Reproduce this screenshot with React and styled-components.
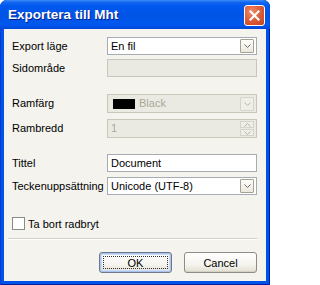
import styled, { createGlobalStyle } from 'styled-components';

const GlobalStyle = createGlobalStyle`
  html, body {
    margin: 0;
    padding: 0;
    background: #ffffff;
  }
  * {
    box-sizing: border-box;
  }
`;

const Window = styled.div`
  width: 270px;
  height: 285px;
  display: flex;
  flex-direction: column;
  background: #0053e8;
  border-radius: 7px 7px 0 0;
  box-shadow: inset 1px 0 0 #0a3bd0, inset -1px 0 0 #001ea0, inset 0 -1px 0 #001ea0;
  font-family: 'Liberation Sans', Arial, sans-serif;
  font-size: 11px;
  color: #000;
  overflow: hidden;
`;

const TitleBar = styled.div`
  height: 29px;
  flex: none;
  display: flex;
  align-items: center;
  justify-content: space-between;
  padding: 0 5px 0 8px;
  border-radius: 7px 7px 0 0;
  background: linear-gradient(
    180deg,
    #3d8ef8 0%,
    #1267f0 8%,
    #0058ee 20%,
    #0054e6 55%,
    #0058ee 85%,
    #0046d8 100%
  );
`;

const Title = styled.span`
  font-family: 'Liberation Sans', Arial, sans-serif;
  font-weight: bold;
  font-size: 13.5px;
  color: #fff;
  text-shadow: 1px 1px 0 #0a1e8a;
`;

const CloseButton = styled.div`
  width: 21px;
  height: 21px;
  margin-top: 1px;
  display: flex;
  align-items: center;
  justify-content: center;
  border: 1px solid #fff;
  border-radius: 3px;
  background: radial-gradient(circle at 35% 30%, #f08a6a 0%, #e0603c 45%, #c4401c 100%);
`;

const Body = styled.div`
  flex: 1;
  margin: 0 4px 4px;
  padding: 8px 9px 8px 8px;
  background: #f4f3ee;
  display: flex;
  flex-direction: column;
`;

const Section = styled.div`
  display: grid;
  grid-template-columns: 95px 150px;
  grid-auto-rows: ${({ $h }) => $h}px;
  row-gap: ${({ $gap }) => $gap}px;
  margin-top: ${({ $mt }) => $mt || 0}px;
  align-items: center;
`;

const Label = styled.span`
  white-space: nowrap;
  line-height: 13px;
`;

const Field = styled.div`
  height: 100%;
  display: flex;
  align-items: center;
  padding: 0 2px 0 3px;
  border: 1px solid ${({ $disabled }) => ($disabled ? '#c9c7ba' : '#a5acb2')};
  background: ${({ $disabled }) => ($disabled ? '#ebeae2' : '#fff')};
  color: ${({ $disabled }) => ($disabled ? '#aca899' : '#000')};
`;

const FieldText = styled.span`
  flex: 1;
  white-space: nowrap;
  line-height: 13px;
`;

const Swatch = styled.span`
  width: 22px;
  height: 10px;
  margin: 0 4px 0 2px;
  background: #000;
  flex: none;
`;

const DropButton = styled.div`
  width: 14px;
  height: 14px;
  flex: none;
  display: flex;
  align-items: center;
  justify-content: center;
  border: 1px solid ${({ $disabled }) => ($disabled ? '#d6d3c8' : '#a5a293')};
  border-radius: 1px;
  background: ${({ $disabled }) =>
    $disabled ? '#efeee8' : 'linear-gradient(180deg, #fdfdfb 0%, #ebe8de 100%)'};
`;

const Spinner = styled.div`
  width: 14px;
  height: 15px;
  flex: none;
  display: flex;
  flex-direction: column;
  gap: 1px;
`;

const SpinPart = styled.div`
  flex: 1;
  display: flex;
  align-items: center;
  justify-content: center;
  border: 1px solid #d6d3c8;
  background: #efeee8;
`;

const CheckRow = styled.label`
  display: flex;
  align-items: center;
  gap: 3px;
  margin-top: 22px;
  height: 13px;
`;

const CheckBox = styled.span`
  width: 13px;
  height: 13px;
  border: 1px solid #8a8a86;
  background: #fff;
  flex: none;
`;

const Separator = styled.div`
  margin: 8px 0 0 -4px;
  height: 2px;
  border-top: 1px solid #d0cfc8;
  border-bottom: 1px solid #fff;
`;

const ButtonRow = styled.div`
  display: flex;
  justify-content: flex-end;
  gap: 12px;
  margin-top: 12px;
`;

const Button = styled.div`
  width: 73px;
  height: 21px;
  display: flex;
  align-items: center;
  justify-content: center;
  border: 1px solid ${({ $default }) => ($default ? '#6e7a8a' : '#8e8c84')};
  border-radius: 3px;
  background: linear-gradient(180deg, #ffffff 0%, #f5f4ef 60%, #e2dfd4 100%);
  box-shadow: ${({ $default }) =>
    $default ? 'inset 0 0 0 1px #a9c3ee, inset 0 0 0 2px #cddcf5' : 'inset 0 -1px 0 #d6d2c2'};
  position: relative;
`;

const FocusRing = styled.span`
  position: absolute;
  inset: 3px;
  border: 1px dotted #333;
`;

const Chevron = ({ up, color = '#6d6c66' }) => (
  <svg width="7" height="4" viewBox="0 0 7 4">
    <path
      d={up ? 'M0.5 3.5 L3.5 0.5 L6.5 3.5' : 'M0.5 0.5 L3.5 3.5 L6.5 0.5'}
      fill="none"
      stroke={color}
      strokeWidth="1"
    />
  </svg>
);

export default function App() {
  return (
    <>
      <GlobalStyle />
      <Window>
        <TitleBar>
          <Title>Exportera till Mht</Title>
          <CloseButton>
            <svg width="11" height="11" viewBox="0 0 11 11">
              <path d="M1.5 1.5 L9.5 9.5 M9.5 1.5 L1.5 9.5" stroke="#fff" strokeWidth="2.2" strokeLinecap="square" />
            </svg>
          </CloseButton>
        </TitleBar>
        <Body>
          <Section $h={18} $gap={4}>
            <Label>Export läge</Label>
            <Field>
              <FieldText>En fil</FieldText>
              <DropButton>
                <Chevron />
              </DropButton>
            </Field>
            <Label>Sidområde</Label>
            <Field $disabled />
          </Section>

          <Section $h={19} $gap={6} $mt={17}>
            <Label>Ramfärg</Label>
            <Field $disabled>
              <Swatch />
              <FieldText>Black</FieldText>
              <DropButton $disabled>
                <Chevron color="#b5b3aa" />
              </DropButton>
            </Field>
            <Label>Rambredd</Label>
            <Field $disabled>
              <FieldText>1</FieldText>
              <Spinner>
                <SpinPart>
                  <Chevron up color="#b5b3aa" />
                </SpinPart>
                <SpinPart>
                  <Chevron color="#b5b3aa" />
                </SpinPart>
              </Spinner>
            </Field>
          </Section>

          <Section $h={18} $gap={5} $mt={16}>
            <Label>Tittel</Label>
            <Field>
              <FieldText>Document</FieldText>
            </Field>
            <Label>Teckenuppsättning</Label>
            <Field>
              <FieldText>Unicode (UTF-8)</FieldText>
              <DropButton>
                <Chevron />
              </DropButton>
            </Field>
          </Section>

          <CheckRow>
            <CheckBox />
            Ta bort radbryt
          </CheckRow>

          <Separator />

          <ButtonRow>
            <Button $default>
              <FocusRing />
              OK
            </Button>
            <Button>Cancel</Button>
          </ButtonRow>
        </Body>
      </Window>
    </>
  );
}
